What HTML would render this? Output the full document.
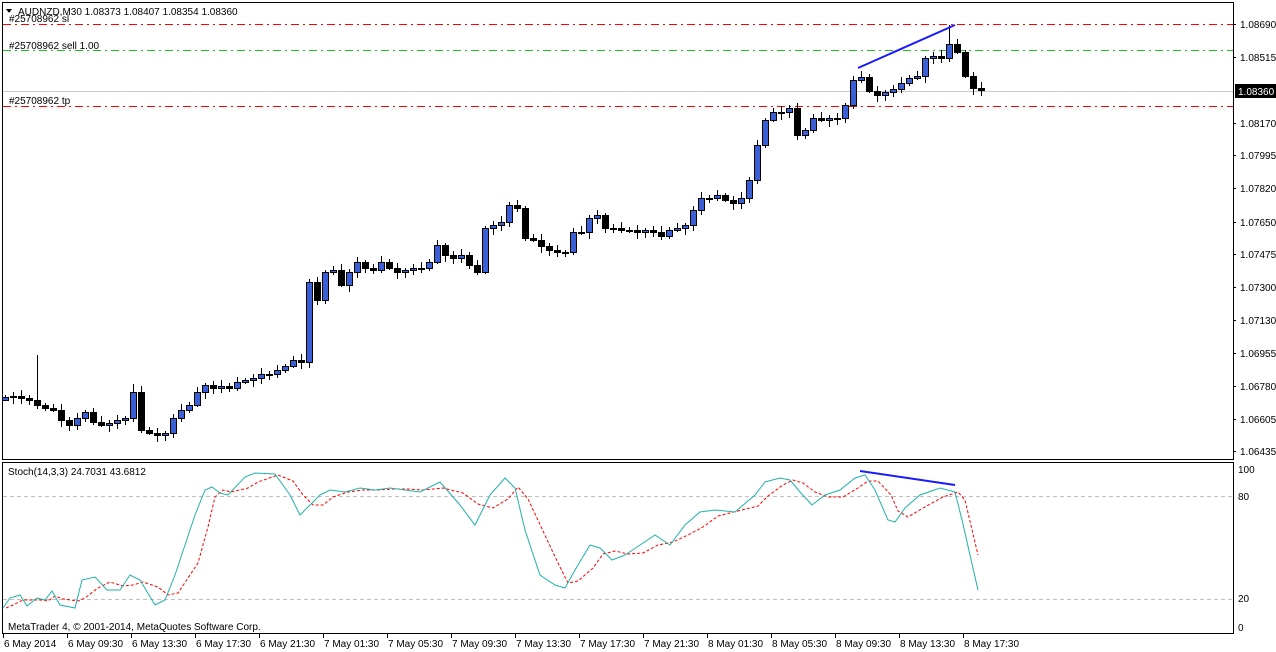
<!DOCTYPE html>
<html><head><meta charset="utf-8"><style>
html,body{margin:0;padding:0;background:#fff;width:1276px;height:652px;overflow:hidden}
svg{display:block;font-family:"Liberation Sans",Arial,sans-serif}
text{font-size:10px;fill:#000}
</style></head><body>
<svg id="s" width="1276" height="652" viewBox="0 0 1276 652" shape-rendering="crispEdges">
<rect x="0" y="0" width="1276" height="652" fill="#fff"/>
<rect x="2.5" y="2.5" width="1231" height="457" fill="none" stroke="#000"/>
<rect x="2.5" y="462.5" width="1231" height="171" fill="none" stroke="#000"/>
<line x1="3" y1="24.5" x2="1233" y2="24.5" stroke="#f00" stroke-dasharray="8,4,2,4"/>
<line x1="3" y1="50.5" x2="1233" y2="50.5" stroke="#2b2" stroke-dasharray="8,4,2,4"/>
<line x1="3" y1="91.5" x2="1233" y2="91.5" stroke="#c8c8c8"/>
<line x1="3" y1="106.5" x2="1233" y2="106.5" stroke="#f00" stroke-dasharray="8,4,2,4"/>
<text x="9" y="22">#25708962 sl</text>
<text x="9" y="49">#25708962 sell 1.00</text>
<text x="9" y="104">#25708962 tp</text>
<path d="M6 9 L12 9 L9 13 Z" fill="#000"/>
<text x="18" y="15">AUDNZD,M30  1.08373 1.08407 1.08354 1.08360</text>
<g id="candles"></g>
<line x1="858" y1="68" x2="955" y2="25" stroke="#1a1aff" stroke-width="2" shape-rendering="auto"/>
<g id="pax"></g>
<rect x="1235" y="84" width="41" height="14" fill="#000"/>
<text x="1238" y="95" style="fill:#fff">1.08360</text>
<text x="8" y="475">Stoch(14,3,3) 24.7031 43.6812</text>
<line x1="3" y1="496.5" x2="1233" y2="496.5" stroke="#c0c0c0" stroke-dasharray="4,3"/>
<line x1="3" y1="599.5" x2="1233" y2="599.5" stroke="#c0c0c0" stroke-dasharray="4,3"/>
<text x="1238" y="473">100</text><text x="1238" y="500">80</text><text x="1238" y="602">20</text><text x="1238" y="631">0</text>
<polyline id="sig" fill="none" stroke="#f00" stroke-dasharray="3,2" shape-rendering="auto"/>
<polyline id="main" fill="none" stroke="#20b2aa" shape-rendering="auto"/>
<line x1="860" y1="471" x2="955" y2="485" stroke="#1a1aff" stroke-width="2" shape-rendering="auto"/>
<text x="8" y="630">MetaTrader 4, © 2001-2014, MetaQuotes Software Corp.</text>
<g id="tax"></g>
</svg>
<script>
(function(){
var NS="http://www.w3.org/2000/svg",s=document.getElementById('s');
function el(t,a,p,txt){var e=document.createElementNS(NS,t);for(var k in a)e.setAttribute(k,a[k]);if(txt)e.textContent=txt;(p||s).appendChild(e);return e;}
var c=[397,396,398,400,405,408,410,420,425,418,412,422,425,423,420,418,392,430,433,435,433,418,410,405,392,385,388,386,388,382,380,378,374,374,370,366,360,362,282,300,272,270,285,272,262,268,270,262,268,272,270,268,268,262,245,255,258,255,265,272,228,225,222,205,208,238,240,246,250,252,252,232,232,218,215,228,228,230,230,232,230,232,236,230,228,225,210,198,198,195,200,203,198,180,145,120,112,112,108,135,130,118,120,118,118,105,80,77,91,95,92,89,83,78,76,58,56,58,44,52,76,88,90];
var g=document.getElementById('candles'),n=c.length,o0=c[0]+3;
for(var i=0;i<n;i++){var x=Math.round(5+i*976/(n-1)),cl=c[i],op=(i==0?o0:c[i-1]);
 var tp=Math.min(op,cl),bt=Math.max(op,cl);if(bt-tp<1)bt=tp+1;
 var hw=((i*7)%5)+2,lw=((i*11)%6)+2;
 if(i==16)hw=8;if(i==0)lw=0;if(cl==44)hw=19;if(cl==52)lw=2;
 el('line',{x1:x+.5,y1:tp-hw,x2:x+.5,y2:bt+lw,stroke:'#000'},g);
 el('rect',{x:x-2.5,y:tp+.5,width:6,height:bt-tp,fill:cl<op?'#3b5fd6':'#000',stroke:'#000'},g);}
el('line',{x1:37.5,y1:355,x2:37.5,y2:400,stroke:'#000'},g);
var P=[["1.08690",28],["1.08515",61],["1.08170",127],["1.07995",159],["1.07820",192],["1.07650",226],["1.07475",258],["1.07300",291],["1.07130",324],["1.06955",357],["1.06780",390],["1.06605",423],["1.06435",455]],pa=document.getElementById('pax');
P.forEach(function(p){el('line',{x1:1233,y1:p[1]-3.5,x2:1236,y2:p[1]-3.5,stroke:'#000'},pa);el('text',{x:1240,y:p[1]},pa,p[0]);});
var T=["6 May 2014","6 May 09:30","6 May 13:30","6 May 17:30","6 May 21:30","7 May 01:30","7 May 05:30","7 May 09:30","7 May 13:30","7 May 17:30","7 May 21:30","8 May 01:30","8 May 05:30","8 May 09:30","8 May 13:30","8 May 17:30"],ta=document.getElementById('tax');
T.forEach(function(t,i){var x=3+i*64;el('line',{x1:x+.5,y1:634,x2:x+.5,y2:638,stroke:'#000'},ta);el('text',{x:x+1,y:647},ta,t);});
var M=[[3,608],[10,598],[20,595],[27,606],[37,598],[45,600],[52,591],[60,605],[75,608],[82,580],[95,577],[107,590],[120,590],[130,575],[140,580],[155,605],[165,600],[175,575],[195,515],[205,490],[212,487],[220,493],[228,495],[245,477],[255,473],[275,474],[290,495],[300,515],[310,505],[320,495],[330,490],[345,492],[360,488],[375,490],[390,488],[405,490],[420,492],[440,482],[460,505],[475,525],[490,495],[505,478],[515,488],[525,530],[540,575],[555,585],[565,588],[575,570],[590,545],[600,548],[612,560],[625,555],[640,545],[655,535],[670,545],[685,525],[700,512],[715,510],[735,512],[755,495],[765,482],[780,478],[790,480],[800,492],[812,505],[825,495],[840,490],[855,478],[865,475],[875,490],[888,520],[895,522],[905,508],[920,495],[940,488],[955,492],[962,520],[978,590]];
document.getElementById('main').setAttribute('points',M.map(function(p){return p.join(',')}).join(' '));
var S=M.map(function(p,i){var a=M[Math.max(0,i-1)],b=M[Math.max(0,i-2)];return [p[0]+3,Math.round((p[1]+a[1]+b[1])/3)];});
S[S.length-1]=[978,555];
document.getElementById('sig').setAttribute('points',S.map(function(p){return p.join(',')}).join(' '));
})();
</script>
</body></html>
